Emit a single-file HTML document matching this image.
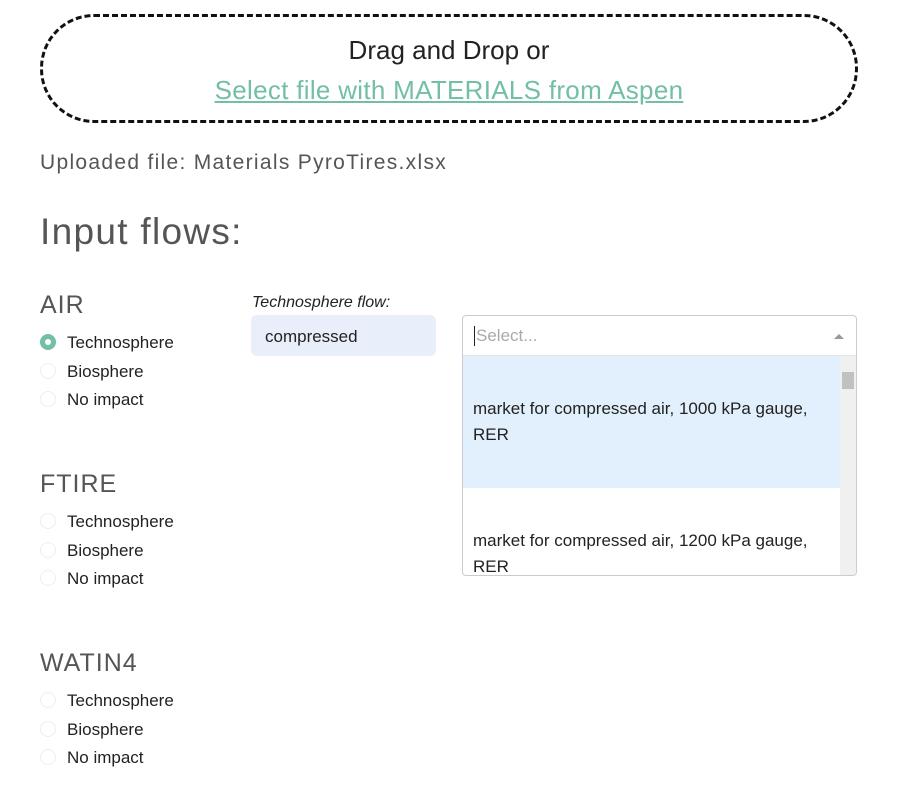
<!DOCTYPE html><html><head><style>
body{margin:0;width:900px;height:807px;background:#fff;font-family:"Liberation Sans",sans-serif;color:#222;position:relative;overflow:hidden}
.a{position:absolute}
.drop{left:40px;top:14px;width:812px;height:103px;border:3px dashed #111;border-radius:54px;text-align:center}
.rl{font-size:17px;color:#222;left:67px}
.rd{width:16px;height:16px;border-radius:50%;border:1px solid #eee;left:40px;box-sizing:border-box}
.sel{width:16px;height:16px;border-radius:50%;background:#72bfa5;left:40px}
.sel:after{content:"";position:absolute;left:5px;top:5px;width:6px;height:6px;border-radius:50%;background:#fff}
h{position:absolute;font-size:25px;color:#555;left:40px;letter-spacing:1px}
</style></head><body>
<div class="a drop"><div style="font-size:26px;margin-top:18px">Drag and Drop or</div><div style="font-size:26px;color:#72bfa5;text-decoration:underline;margin-top:9px;letter-spacing:0.3px">Select file with MATERIALS from Aspen</div></div>
<div class="a" style="left:40px;top:151px;font-size:21px;color:#555;letter-spacing:1.3px">Uploaded file: Materials PyroTires.xlsx</div>
<div class="a" style="left:40px;top:211px;font-size:37px;color:#555;letter-spacing:1.3px">Input flows:</div>
<h style="top:291px">AIR</h>
<div class="a sel" style="top:334px"></div><div class="a rl" style="top:333px">Technosphere</div>
<div class="a rd" style="top:363px"></div><div class="a rl" style="top:362px">Biosphere</div>
<div class="a rd" style="top:391px"></div><div class="a rl" style="top:390px">No impact</div>
<h style="top:470px">FTIRE</h>
<div class="a rd" style="top:513px"></div><div class="a rl" style="top:512px">Technosphere</div>
<div class="a rd" style="top:542px"></div><div class="a rl" style="top:541px">Biosphere</div>
<div class="a rd" style="top:570px"></div><div class="a rl" style="top:569px">No impact</div>
<h style="top:649px">WATIN4</h>
<div class="a rd" style="top:692px"></div><div class="a rl" style="top:691px">Technosphere</div>
<div class="a rd" style="top:721px"></div><div class="a rl" style="top:720px">Biosphere</div>
<div class="a rd" style="top:749px"></div><div class="a rl" style="top:748px">No impact</div>
<div class="a" style="left:252px;top:294px;font-size:16px;font-style:italic">Technosphere flow:</div>
<div class="a" style="left:251px;top:315px;width:185px;height:41px;background:#e8eefa;border-radius:6px;box-sizing:border-box;padding:12px 14px;font-size:17px">compressed</div>
<div class="a" style="left:462px;top:315px;width:395px;height:261px;border:1px solid #ccc;border-radius:4px;box-sizing:border-box;overflow:hidden">
<div style="height:39px;border-bottom:1px solid #e6e6e6;position:relative"><span style="position:absolute;left:11px;top:10px;font-size:17px;color:#aaa;border-left:1px solid #222;padding-left:1px">Select...</span><span style="position:absolute;right:12px;top:18px;border:5px solid transparent;border-bottom:5px solid #999;border-top:0"></span></div>
<div style="position:absolute;left:0;top:40px;width:378px;height:132px;background:#e2effc"></div>
<div style="position:absolute;left:10px;top:80px;font-size:17px;line-height:26px">market for compressed air, 1000 kPa gauge,<br>RER</div>
<div style="position:absolute;left:10px;top:212px;font-size:17px;line-height:26px">market for compressed air, 1200 kPa gauge,<br>RER</div>
<div style="position:absolute;right:0;top:40px;width:16px;height:220px;background:#f0f0f0"><div style="margin:16px 2px 0;height:17px;background:#c1c1c1"></div></div>
</div>
</body></html>
